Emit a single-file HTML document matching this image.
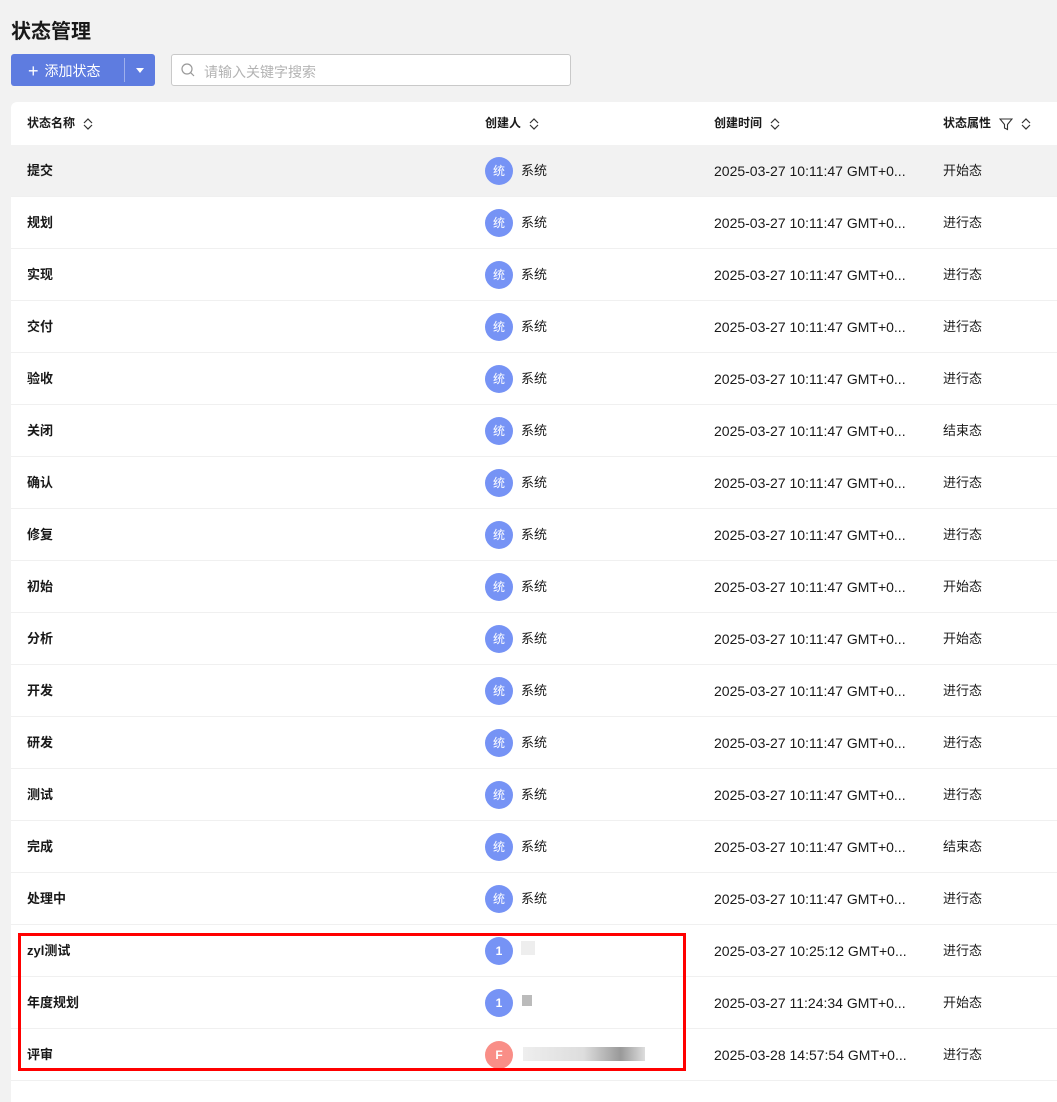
<!DOCTYPE html>
<html><head><meta charset="utf-8"><style>
*{margin:0;padding:0;box-sizing:border-box}
body{width:1057px;height:1073px;overflow:hidden;background:#f2f2f2;font-family:"Liberation Sans","Noto Sans CJK SC",sans-serif;color:#191919;position:relative}
h1{position:absolute;left:11px;top:15px;font-size:20px;font-weight:bold;color:#191919}
.btn{position:absolute;left:11px;top:54px;width:144px;height:32px;background:#5e7ce0;border-radius:3px;color:#fff;font-size:14px}
.btn .t{position:absolute;left:17px;top:7px}
.btn .sep{position:absolute;left:113px;top:4px;width:1px;height:24px;background:rgba(255,255,255,.4)}
.btn .ar{position:absolute;left:125px;top:14px;border-left:4px solid transparent;border-right:4px solid transparent;border-top:5px solid #fff}
.search{position:absolute;left:171px;top:54px;width:400px;height:32px;border:1px solid #c9c9c9;border-radius:3px;background:#fff;font-size:14px;color:#b3b3b3}
.search span{position:absolute;left:32px;top:7px}
.card{position:absolute;left:11px;top:102px;width:1060px;height:1000px;background:#fff;border-radius:6px 0 0 0}
.hd{position:absolute;top:0;height:43px;font-size:12px;font-weight:bold;line-height:43px;color:#191919}
.row{position:absolute;left:0;width:1060px;height:52px;border-bottom:1px solid #f0f0f0;font-size:13px}
.row.g{background:#f2f2f2}
.row div{position:absolute;top:0;line-height:52px}
.n{left:16px;font-weight:bold}
.av{left:474px;top:12px!important;width:28px;height:28px;border-radius:50%;background:#7693f5;color:#fff;font-size:12px;line-height:28px!important;text-align:center}
.u{left:510px}
.tm{left:703px;font-size:14px}
.at{left:932px}
.sort{display:inline-block;vertical-align:middle;margin-left:8px}
.red{position:absolute;left:18px;top:933px;width:668px;height:138px;border:3px solid #f00}
</style></head><body>
<h1>状态管理</h1>
<div class="btn"><span class="t"><span style="font-size:18px;font-weight:300;margin-right:6px;vertical-align:-1px">+</span>添加状态</span><div class="sep"></div><div class="ar"></div></div>
<div class="search"><svg style="position:absolute;left:9px;top:8px" width="14" height="14" viewBox="0 0 14 14"><circle cx="6" cy="6" r="5" fill="none" stroke="#999" stroke-width="1.2"/><path d="M9.7 9.7L13 13" stroke="#999" stroke-width="1.2"/></svg><span>请输入关键字搜索</span></div>
<div class="card">
<div class="hd" style="left:16px">状态名称<svg class="sort" width="10" height="14" viewBox="0 0 10 14"><path d="M1 6L5 2L9 6M1 8L5 12L9 8" fill="none" stroke="#333" stroke-width="1.2"/></svg></div>
<div class="hd" style="left:474px">创建人<svg class="sort" width="10" height="14" viewBox="0 0 10 14"><path d="M1 6L5 2L9 6M1 8L5 12L9 8" fill="none" stroke="#333" stroke-width="1.2"/></svg></div>
<div class="hd" style="left:703px">创建时间<svg class="sort" width="10" height="14" viewBox="0 0 10 14"><path d="M1 6L5 2L9 6M1 8L5 12L9 8" fill="none" stroke="#333" stroke-width="1.2"/></svg></div>
<div class="hd" style="left:932px">状态属性<svg class="sort" width="14" height="14" viewBox="0 0 14 14"><path d="M1 2H13L8.5 7.5V12.5L5.5 11V7.5Z" fill="none" stroke="#333" stroke-width="1.1"/></svg><svg class="sort" width="10" height="14" viewBox="0 0 10 14"><path d="M1 6L5 2L9 6M1 8L5 12L9 8" fill="none" stroke="#333" stroke-width="1.2"/></svg></div>
</div>
<div id="rows"></div>
<script></script>
<div style="position:absolute;left:11px;top:145px">
<div class="row g" style="top:0"><div class="n">提交</div><div class="av">统</div><div class="u">系统</div><div class="tm">2025-03-27 10:11:47 GMT+0...</div><div class="at">开始态</div></div>
<div class="row" style="top:52px"><div class="n">规划</div><div class="av">统</div><div class="u">系统</div><div class="tm">2025-03-27 10:11:47 GMT+0...</div><div class="at">进行态</div></div>
<div class="row" style="top:104px"><div class="n">实现</div><div class="av">统</div><div class="u">系统</div><div class="tm">2025-03-27 10:11:47 GMT+0...</div><div class="at">进行态</div></div>
<div class="row" style="top:156px"><div class="n">交付</div><div class="av">统</div><div class="u">系统</div><div class="tm">2025-03-27 10:11:47 GMT+0...</div><div class="at">进行态</div></div>
<div class="row" style="top:208px"><div class="n">验收</div><div class="av">统</div><div class="u">系统</div><div class="tm">2025-03-27 10:11:47 GMT+0...</div><div class="at">进行态</div></div>
<div class="row" style="top:260px"><div class="n">关闭</div><div class="av">统</div><div class="u">系统</div><div class="tm">2025-03-27 10:11:47 GMT+0...</div><div class="at">结束态</div></div>
<div class="row" style="top:312px"><div class="n">确认</div><div class="av">统</div><div class="u">系统</div><div class="tm">2025-03-27 10:11:47 GMT+0...</div><div class="at">进行态</div></div>
<div class="row" style="top:364px"><div class="n">修复</div><div class="av">统</div><div class="u">系统</div><div class="tm">2025-03-27 10:11:47 GMT+0...</div><div class="at">进行态</div></div>
<div class="row" style="top:416px"><div class="n">初始</div><div class="av">统</div><div class="u">系统</div><div class="tm">2025-03-27 10:11:47 GMT+0...</div><div class="at">开始态</div></div>
<div class="row" style="top:468px"><div class="n">分析</div><div class="av">统</div><div class="u">系统</div><div class="tm">2025-03-27 10:11:47 GMT+0...</div><div class="at">开始态</div></div>
<div class="row" style="top:520px"><div class="n">开发</div><div class="av">统</div><div class="u">系统</div><div class="tm">2025-03-27 10:11:47 GMT+0...</div><div class="at">进行态</div></div>
<div class="row" style="top:572px"><div class="n">研发</div><div class="av">统</div><div class="u">系统</div><div class="tm">2025-03-27 10:11:47 GMT+0...</div><div class="at">进行态</div></div>
<div class="row" style="top:624px"><div class="n">测试</div><div class="av">统</div><div class="u">系统</div><div class="tm">2025-03-27 10:11:47 GMT+0...</div><div class="at">进行态</div></div>
<div class="row" style="top:676px"><div class="n">完成</div><div class="av">统</div><div class="u">系统</div><div class="tm">2025-03-27 10:11:47 GMT+0...</div><div class="at">结束态</div></div>
<div class="row" style="top:728px"><div class="n">处理中</div><div class="av">统</div><div class="u">系统</div><div class="tm">2025-03-27 10:11:47 GMT+0...</div><div class="at">进行态</div></div>
<div class="row" style="top:780px"><div class="n">zyl测试</div><div class="av" style="font-weight:bold">1</div><div style="left:510px;top:16px;width:14px;height:14px;background:#eee"></div><div class="tm">2025-03-27 10:25:12 GMT+0...</div><div class="at">进行态</div></div>
<div class="row" style="top:832px"><div class="n">年度规划</div><div class="av" style="font-weight:bold">1</div><div style="left:511px;top:18px;width:10px;height:11px;background:#bbb"></div><div class="tm">2025-03-27 11:24:34 GMT+0...</div><div class="at">开始态</div></div>
<div class="row" style="top:884px"><div class="n">评审</div><div class="av" style="background:#f98e87;font-weight:bold">F</div><div style="left:512px;top:18px;width:122px;height:14px;background:linear-gradient(90deg,#eee,#ddd 50%,#999 80%,#ddd)"></div><div class="tm">2025-03-28 14:57:54 GMT+0...</div><div class="at">进行态</div></div>
</div>
<div class="red"></div>
</body></html>
